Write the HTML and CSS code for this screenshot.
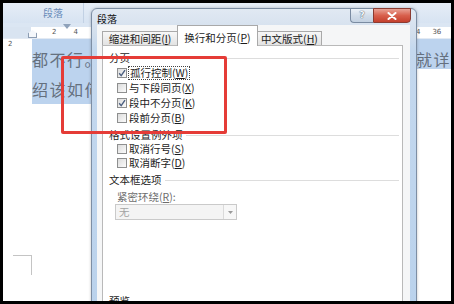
FILE: index.html
```html
<!DOCTYPE html>
<html>
  <head>
    <title>段落</title>
    <link rel="stylesheet" href="styles.css">
  </head>
  <body>
    <div class="window">
      <div class="ribbon">
        <div class="group-label">段落</div>
        <div class="group-sep"></div>
      </div>
      <div class="ribbon-foot"></div>
      <div class="ruler">
        <div class="ruler-margin"><span class="tick t1">2</span></div>
        <div class="ruler-body">
          <span class="tick t2">2</span>
          <span class="tick t3">4</span>
          <span class="tick t4">4</span>
          <span class="tick t5">36</span>
        </div>
        <div class="indent-marker"></div>
        <div class="tab-marker"></div>
      </div>
      <div class="doc">
        <div class="doc-line first">
          <span>都不行。</span>
          <span class="line-end">就详细</span>
        </div>
        <div class="doc-line second"><span>绍该如何</span></div>
        <div class="crop-mark"></div>
      </div>

      <div class="dialog">
        <div class="title-bar">
          <span class="title">段落</span>
          <div class="caption-buttons">
            <div class="btn-help">?</div>
            <div class="btn-close">
              <svg width="10" height="8" viewBox="0 0 10 8"><path d="M1.5 1 L8.5 7 M8.5 1 L1.5 7" stroke="#fff" stroke-width="2" stroke-linecap="round"/></svg>
            </div>
          </div>
        </div>
        <div class="client">
          <div class="tabs">
            <div class="tab tab-indent">缩进和间距(<u>I</u>)</div>
            <div class="tab active">换行和分页(<u>P</u>)</div>
            <div class="tab tab-asian">中文版式(<u>H</u>)</div>
          </div>
          <div class="panel">
            <div class="group-head"><span>分页</span></div>
            <div class="check-row">
              <span class="box checked"><svg width="8" height="8" viewBox="0 0 8 8"><path d="M1.2 4.2 L3.2 6.6 L7 1.2" fill="none" stroke="#4b5f80" stroke-width="1.4"/></svg></span>
              <span class="label focus">孤行控制(<u>W</u>)</span>
            </div>
            <div class="check-row">
              <span class="box"></span>
              <span class="label">与下段同页(<u>X</u>)</span>
            </div>
            <div class="check-row">
              <span class="box checked"><svg width="8" height="8" viewBox="0 0 8 8"><path d="M1.2 4.2 L3.2 6.6 L7 1.2" fill="none" stroke="#4b5f80" stroke-width="1.4"/></svg></span>
              <span class="label">段中不分页(<u>K</u>)</span>
            </div>
            <div class="check-row">
              <span class="box"></span>
              <span class="label">段前分页(<u>B</u>)</span>
            </div>

            <div class="group-head"><span>格式设置例外项</span></div>
            <div class="check-row tight">
              <span class="box"></span>
              <span class="label">取消行号(<u>S</u>)</span>
            </div>
            <div class="check-row tight">
              <span class="box"></span>
              <span class="label">取消断字(<u>D</u>)</span>
            </div>

            <div class="group-head"><span>文本框选项</span></div>
            <div class="field-label">紧密环绕(<u>R</u>):</div>
            <div class="select">
              <span class="select-value">无</span>
              <span class="select-arrow">
                <svg width="5" height="3" viewBox="0 0 5 3"><path d="M0 0 H5 L2.5 3 Z" fill="#9a9a9a"/></svg>
              </span>
            </div>

            <div class="group-head preview"><span>预览</span></div>
          </div>
        </div>
      </div>

      <div class="callout"></div>
    </div>
  </body>
</html>
```

FILE: styles.css
```css
body {
  margin: 0;
  padding: 3px;
  background-color: #000000;
  font-family: "Noto Sans CJK SC", "Noto Sans", sans-serif;
}

.window {
  position: relative;
  width: 448px;
  height: 298px;
  overflow: hidden;
  background-color: #FFFFFF;
}

/* ribbon and ruler */
.ribbon {
  display: flex;
  height: 20px;
  background: linear-gradient(#e6edf7, #d7e3f2);
}

.group-label {
  width: 80px;
  padding: 3px 0 0 40px;
  box-sizing: border-box;
  font-size: 10px;
  line-height: 14px;
  color: #6a8cba;
}

.group-sep {
  width: 1px;
  background-color: #c2d1e4;
}

.ribbon-foot {
  height: 4px;
  background-color: #dbe6f3;
}

.ruler {
  position: relative;
  display: flex;
  height: 11px;
  background-color: #FFFFFF;
  border-bottom: 1px solid #e3eaf3;
}

.ruler-margin {
  width: 28px;
  background-color: #d9e4f1;
}

.ruler-body {
  display: flex;
  flex: 1;
}

.tick {
  font-family: "DejaVu Sans", sans-serif;
  font-size: 7px;
  line-height: 11px;
  color: #555;
}

.t1 { margin-left: 5px; }
.t2 { margin-left: 21px; }
.t3 { margin-left: 17px; }
.t4 { margin-left: 338px; }
.t5 { margin-left: 12px; }

.indent-marker {
  position: absolute;
  left: 25px;
  top: 3px;
  width: 7px;
  height: 7px;
  background-color: #f4f7fb;
  border: 1px solid #8c9db3;
  border-top: none;
  clip-path: polygon(50% 0, 100% 40%, 100% 100%, 0 100%, 0 40%);
}

.tab-marker {
  position: absolute;
  left: 60px;
  top: -3px;
  width: 0;
  height: 0;
  border-left: 4px solid transparent;
  border-right: 4px solid transparent;
  border-top: 5px solid #8fa2ba;
}

/* document */
.doc {
  padding-left: 29px;
  font-size: 16px;
  letter-spacing: 1.5px;
  color: #65707e;
}

.doc-line {
  box-sizing: border-box;
  line-height: 20px;
  padding-top: 10px;
  background-color: #bcd3ee;
  white-space: nowrap;
}

.doc-line.first {
  display: flex;
  justify-content: space-between;
  height: 30px;
}

.doc-line.second {
  width: 260px;
  height: 35px;
}

.line-end {
  width: 35px;
  overflow: hidden;
}

.crop-mark {
  width: 19px;
  height: 20px;
  margin: 151px 0 0 -19px;
  border-top: 1px solid #c4c4c4;
  border-right: 1px solid #c4c4c4;
  box-sizing: border-box;
}

/* dialog */
.dialog {
  position: absolute;
  left: 88px;
  top: 5px;
  width: 324px;
  height: 300px;
  display: flex;
  flex-direction: column;
  border: 1px solid #7d8ea4;
  border-radius: 6px 6px 0 0;
  background: linear-gradient(#e1e9f3, #d3dfed 24px, #c4d8ee 40px, #bad2ec);
  box-shadow: 0 0 3px rgba(0, 0, 0, 0.25);
}

.title-bar {
  display: flex;
  height: 22px;
}

.title {
  padding: 4px 0 0 5px;
  font-size: 10px;
  line-height: 12px;
  color: #111;
}

.caption-buttons {
  display: flex;
  margin: -1px 5px 0 auto;
  height: 15px;
}

.btn-help {
  width: 23px;
  box-sizing: border-box;
  border: 1px solid #7a8ba1;
  border-right: none;
  border-radius: 0 0 0 4px;
  background: linear-gradient(#edf2f8, #d2dde9 50%, #c3d1e1);
  text-align: center;
  font-family: "DejaVu Sans", sans-serif;
  font-size: 9px;
  font-weight: bold;
  line-height: 13px;
  color: #f4f7fa;
  text-shadow: 0 0 1px #4c5c70, 0 0 1px #4c5c70;
}

.btn-close {
  display: flex;
  align-items: center;
  justify-content: center;
  width: 38px;
  box-sizing: border-box;
  border: 1px solid #8b3b31;
  border-radius: 0 0 4px 0;
  background: linear-gradient(#e9a295, #d8604d 50%, #c43f2c);
}

.client {
  display: flex;
  flex-direction: column;
  flex: 1;
  margin: 0 6px 0 5px;
  padding: 0 7px 0 5px;
  background-color: #f5f6f7;
}

.tabs {
  display: flex;
  align-items: flex-end;
  height: 20px;
  font-size: 10.5px;
  color: #1c1c1c;
}

.tab {
  box-sizing: border-box;
  height: 14px;
  border: 1px solid #a9a9a9;
  border-bottom: none;
  background: linear-gradient(#f7f7f7, #e3e3e3);
  text-align: center;
  line-height: 13px;
  white-space: nowrap;
}

.tab-indent { width: 76px; }
.tab-asian { width: 65px; }

.tab.active {
  position: relative;
  width: 81px;
  height: 21px;
  margin: 0 -1px -1px;
  padding-top: 5px;
  background: #FFFFFF;
}

.tab u, .label u, .field-label u {
  text-underline-offset: 1px;
}

.panel {
  flex: 1;
  padding: 5px 3px 0 6px;
  border: 1px solid #b9b9b9;
  background-color: #FFFFFF;
  font-size: 10.5px;
  color: #1c1c1c;
}

.group-head {
  display: flex;
  align-items: center;
  gap: 3px;
  height: 14px;
  line-height: 14px;
  margin-top: 3px;
}

.group-head:first-child {
  margin-top: 0;
}

.group-head::after {
  content: "";
  flex: 1;
  height: 1px;
  background-color: #dddddd;
}

.group-head.preview {
  margin-top: 74px;
}

.check-row {
  display: flex;
  align-items: center;
  gap: 2px;
  height: 15px;
  padding-left: 8px;
  line-height: 12px;
}

.check-row:nth-child(6) {
  margin-top: 2px;
}

.check-row.tight {
  height: 14px;
}

.box {
  display: flex;
  align-items: center;
  justify-content: center;
  width: 10px;
  height: 10px;
  box-sizing: border-box;
  border: 1px solid #8e8f8f;
  background: linear-gradient(135deg, #dcdcdc, #fbfbfb);
}

.label.focus {
  outline: 1px dotted #444;
  outline-offset: 0;
  padding: 0 1px;
}

.field-label {
  margin-top: 3px;
  padding-left: 8px;
  line-height: 14px;
  color: #6d6d6d;
}

.select {
  display: flex;
  width: 122px;
  height: 16px;
  margin-left: 6px;
  box-sizing: border-box;
  border: 1px solid #cacaca;
  background-color: #f4f4f4;
}

.select-value {
  flex: 1;
  padding-left: 3px;
  line-height: 14px;
  color: #a3a3a3;
}

.select-arrow {
  display: flex;
  align-items: center;
  justify-content: center;
  width: 12px;
  border-left: 1px solid #dadada;
  background-color: #f7f7f7;
}

/* annotation */
.callout {
  position: absolute;
  left: 58px;
  top: 53px;
  width: 166px;
  height: 78px;
  box-sizing: border-box;
  border: 3px solid #e53c37;
  border-radius: 2px;
}
```
